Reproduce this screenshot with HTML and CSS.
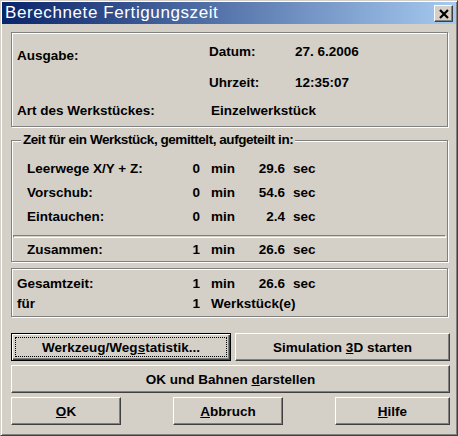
FILE: index.html
```html
<!DOCTYPE html>
<html lang="de">
<head>
<meta charset="utf-8">
<title>Berechnete Fertigungszeit</title>
<link rel="stylesheet" href="styles.css">
</head>
<body>
<div class="window">
  <div class="titlebar">
    <span class="title">Berechnete Fertigungszeit</span>
    <button class="close" aria-label="Schließen">
      <svg width="10" height="10" viewBox="0 0 10 10"><path d="M1 1 L9 9 M9 1 L1 9" stroke="#000" stroke-width="2.2" fill="none"/></svg>
    </button>
  </div>
  <div class="content">
    <div class="group g1">
      <span class="ausgabe">Ausgabe:</span>
      <span class="c2 r1">Datum:</span><span class="c3 r1">27. 6.2006</span>
      <span class="c2 r2">Uhrzeit:</span><span class="c3 r2">12:35:07</span>
      <span class="c1 r3">Art des Werkstückes:</span><span class="c23 r3">Einzelwerkstück</span>
    </div>

    <div class="group g2">
      <span class="legend">Zeit für ein Werkstück, gemittelt, aufgeteilt in:</span>
      <div class="trow">
        <span>Leerwege X/Y + Z:</span><span class="num">0</span><span class="unit">min</span><span class="val">29.6</span><span class="sec">sec</span>
      </div>
      <div class="trow">
        <span>Vorschub:</span><span class="num">0</span><span class="unit">min</span><span class="val">54.6</span><span class="sec">sec</span>
      </div>
      <div class="trow">
        <span>Eintauchen:</span><span class="num">0</span><span class="unit">min</span><span class="val">2.4</span><span class="sec">sec</span>
      </div>
      <div class="sep"></div>
      <div class="trow sum">
        <span>Zusammen:</span><span class="num">1</span><span class="unit">min</span><span class="val">26.6</span><span class="sec">sec</span>
      </div>
    </div>

    <div class="group g3">
      <div class="trow">
        <span>Gesamtzeit:</span><span class="num">1</span><span class="unit">min</span><span class="val">26.6</span><span class="sec">sec</span>
      </div>
      <div class="trow">
        <span>für</span><span class="num">1</span><span class="unit wide">Werkstück(e)</span>
      </div>
    </div>

    <div class="btnrow">
      <button class="btn default">Werkzeug/Weg<u>s</u>tatistik...</button>
      <button class="btn">Simulation <u>3</u>D starten</button>
    </div>
    <button class="btn full">OK und Bahnen <u>d</u>arstellen</button>
    <div class="btnrow3">
      <button class="btn"><u>O</u>K</button>
      <button class="btn"><u>A</u>bbruch</button>
      <button class="btn"><u>H</u>ilfe</button>
    </div>
  </div>
</div>
</body>
</html>
```

FILE: styles.css
```css
* { box-sizing: border-box; }
html, body { margin: 0; padding: 0; background: #D4D0C8; }
body {
  font-family: "Liberation Sans", Arial, sans-serif;
  font-size: 13.5px;
  font-weight: bold;
  color: #000;
}
.window {
  width: 458px;
  height: 436px;
  background: #D4D0C8;
  border: 1px solid;
  border-color: #D4D0C8 #404040 #404040 #D4D0C8;
  box-shadow: inset 1px 1px 0 #fff, inset -1px -1px 0 #808080;
  padding: 1px;
}
.titlebar {
  height: 22px;
  background: linear-gradient(to right, #0A246A, #A6CAF0);
  display: flex;
  align-items: flex-start;
  justify-content: space-between;
  padding: 0 3px 0 3px;
}
.title {
  color: #fff;
  font-weight: normal;
  font-size: 17px;
  letter-spacing: 0.6px;
  line-height: 22px;
}
.close {
  margin-top: 3px;
  width: 19px;
  height: 17px;
  padding: 0;
  background: #D4D0C8;
  border: 1px solid;
  border-color: #fff #404040 #404040 #fff;
  box-shadow: inset -1px -1px 0 #808080;
  display: flex;
  align-items: center;
  justify-content: center;
}
.content {
  padding: 8px 6px 0 9px;
  display: flex;
  flex-direction: column;
}
.group {
  position: relative;
  width: 437px;
  border: 1px solid #808080;
  box-shadow: inset 1px 1px 0 #fff, 1px 1px 0 #fff;
  line-height: 16px;
}
.g1 {
  height: 95px;
  padding: 11px 0 0 5px;
  display: grid;
  grid-template-columns: 192px 86px auto;
  grid-template-rows: 31px 28px 16px;
  align-items: start;
}
.ausgabe { grid-column: 1; grid-row: 1; margin-top: 4px; }
.c1 { grid-column: 1; }
.c2 { grid-column: 2; }
.c3 { grid-column: 3; }
.c23 { grid-column: 2 / 4; padding-left: 2px; }
.r1 { grid-row: 1; }
.r2 { grid-row: 2; }
.r3 { grid-row: 3; }

.g2 {
  margin-top: 13px;
  height: 122px;
  padding: 20px 0 0 15px;
  display: flex;
  flex-direction: column;
  gap: 8px;
}
.legend {
  position: absolute;
  top: -9px;
  left: 9px;
  padding: 0 2px;
  letter-spacing: -0.45px;
  background: #D4D0C8;
}
.trow {
  display: grid;
  grid-template-columns: 160px 13px 51px 34px auto;
  height: 16px;
}
.g3 .trow { grid-template-columns: 170px 13px 51px 34px auto; }
.num { text-align: right; }
.unit { padding-left: 11px; }
.unit.wide { grid-column: 3 / 6; }
.val { text-align: right; }
.sec { padding-left: 8px; }
.sep {
  margin: 2px 0 0 -14px;
  width: 433px;
  height: 3px;
  border: 1px solid;
  border-color: #808080 #fff #fff #808080;
}
.sum { margin-top: -4px; }

.g3 {
  margin-top: 6px;
  height: 49px;
  padding: 7px 0 0 5px;
  display: flex;
  flex-direction: column;
  gap: 4px;
}

.btn {
  font-family: "Liberation Sans", Arial, sans-serif;
  font-size: 13.5px;
  font-weight: bold;
  color: #000;
  height: 28px;
  padding: 0;
  background: #D4D0C8;
  border: 1px solid;
  border-color: #fff #404040 #404040 #fff;
  box-shadow: inset -1px -1px 0 #808080;
  text-align: center;
}
.btn.default {
  border: 1px solid #000;
  box-shadow: inset 1px 1px 0 #fff, inset -1px -1px 0 #404040, inset -2px -2px 0 #808080;
  outline: 1px dotted #000;
  outline-offset: -5px;
}
.btnrow {
  margin-top: 16px;
  display: grid;
  grid-template-columns: 220px 215px;
  gap: 4px;
}
.full { margin-top: 4px; width: 439px; }
.btnrow3 {
  margin-top: 4px;
  display: flex;
  justify-content: space-between;
}
.btnrow3 .btn { width: 110px; }
.btnrow3 .btn:last-child { width: 115px; }
```
